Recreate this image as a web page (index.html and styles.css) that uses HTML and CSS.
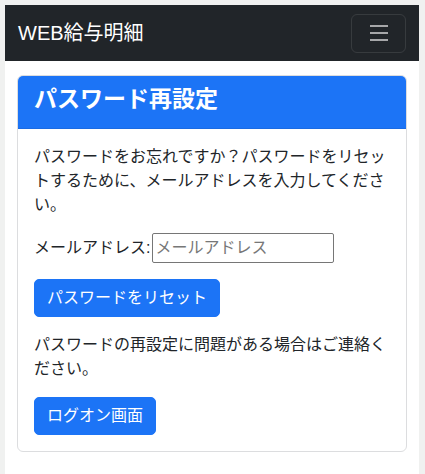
FILE: index.html
```html
<!DOCTYPE html>
<html lang="ja">
<head>
  <meta charset="UTF-8" />
  <title>パスワード再設定 - WEB給与明細</title>
  <link rel="stylesheet" href="styles.css">
</head>
<body>
  <div class="page">
    <nav class="navbar">
      <span class="brand">WEB給与明細</span>
      <button class="toggler" type="button">
        <svg width="30" height="30" viewBox="0 0 30 30">
          <path d="M6 8h18M6 15h18M6 22h18" stroke="rgba(255,255,255,0.6)" stroke-width="2"/>
        </svg>
      </button>
    </nav>

    <main class="content">
      <div class="card">
        <div class="card-header">
          <h2>パスワード再設定</h2>
        </div>
        <div class="card-body">
          <p>パスワードをお忘れですか？パスワードをリセットするために、メールアドレスを入力してください。</p>
          <div class="form-row">
            <label for="email">メールアドレス:</label>
            <input id="email" type="text" placeholder="メールアドレス">
          </div>
          <button class="btn" type="button">パスワードをリセット</button>
          <p>パスワードの再設定に問題がある場合はご連絡ください。</p>
          <button class="btn" type="button">ログオン画面</button>
        </div>
      </div>
    </main>
  </div>
</body>
</html>
```

FILE: styles.css
```css
* {
  box-sizing: border-box;
}

body {
  margin: 0;
  padding: 5px 6px 0 5px;
  background: #f0f1f0;
  font-family: 'Liberation Sans', 'Noto Sans CJK JP', sans-serif;
  font-size: 16px;
  line-height: 1.5;
  color: #212529;
}

.page {
  background: white;
  min-height: 469px;
}

.navbar {
  display: flex;
  align-items: center;
  justify-content: space-between;
  height: 56px;
  padding: 0 13px;
  background: #212529;
}

.brand {
  color: white;
  font-size: 20px;
}

.toggler {
  display: flex;
  align-items: center;
  justify-content: center;
  width: 55px;
  height: 39px;
  padding: 0;
  background: transparent;
  border: 1px solid rgba(255, 255, 255, 0.1);
  border-radius: 6px;
}

.content {
  padding: 14px 12px 0;
}

.card {
  border: 1px solid #dcdddf;
  border-radius: 6px;
  overflow: hidden;
}

.card-header {
  background: #1c74f6;
  height: 53px;
  padding: 0 16px;
  border-bottom: 1px solid #1a6be3;
}

.card-header h2 {
  margin: 0;
  color: white;
  font-size: 23px;
  font-weight: bold;
  line-height: 46px;
}

.card-body {
  padding: 16px 16px 16px;
}

.card-body p {
  margin: 0 0 16px;
}

.form-row {
  display: flex;
  align-items: center;
  margin-bottom: 16px;
}

.form-row input {
  width: 182px;
  height: 30px;
  margin-left: 2px;
  padding: 1px 2px;
  font: inherit;
  color: #212529;
  border: 1px solid #767676;
  border-radius: 2px;
}

.form-row input::placeholder {
  color: #777;
}

.btn {
  display: block;
  margin-bottom: 16px;
  padding: 6px 12px;
  font: inherit;
  color: white;
  background: #1c74f6;
  border: 1px solid #1c74f6;
  border-radius: 5px;
}

.btn:last-child {
  margin-bottom: 0;
}
```
